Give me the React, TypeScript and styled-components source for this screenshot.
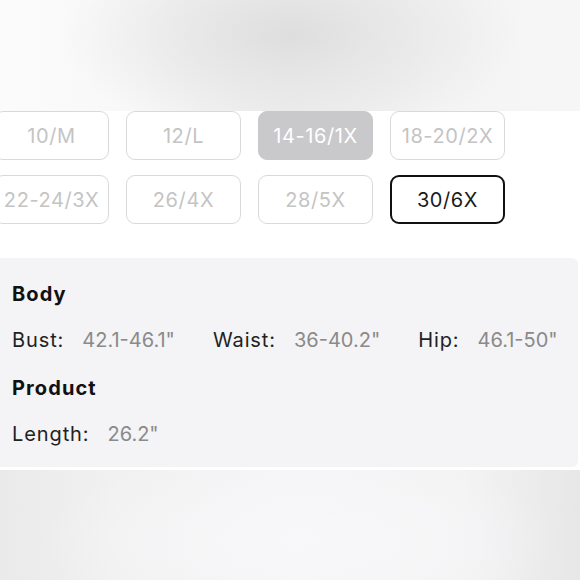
import React from "react";
import styled, { createGlobalStyle } from "styled-components";

const Global = createGlobalStyle`
  html, body { margin: 0; padding: 0; background: #ffffff; }
  body { width: 580px; height: 580px; overflow: hidden; font-family: "Inter", "Liberation Sans", sans-serif; }
  #root { width: 580px; height: 580px; }
`;

const Page = styled.div`
  width: 580px;
  height: 580px;
  display: flex;
  flex-direction: column;
  overflow: hidden;
  background: #ffffff;
`;

const TopBlur = styled.div`
  height: 111px;
  flex: none;
  background:
    radial-gradient(ellipse 230px 110px at 290px 35px, #dedede 0%, rgba(228,228,229,0.85) 35%, rgba(240,240,241,0) 100%),
    linear-gradient(90deg, #fbfbfb 0%, #f8f8f8 25%, #efefef 50%, #f4f4f4 75%, #f6f6f6 100%);
`;

const SizeSection = styled.div`
  flex: none;
  padding: 0 0 34px 0;
  overflow: hidden;
`;

const SizeGrid = styled.div`
  display: grid;
  grid-template-columns: repeat(4, 115px);
  column-gap: 17px;
  row-gap: 15px;
  margin-left: -6px;
`;

const SizeButton = styled.div<{ $state: "idle" | "soldout" | "selected" }>`
  box-sizing: border-box;
  height: 49px;
  border-radius: 9px;
  display: flex;
  align-items: center;
  justify-content: center;
  font-size: 20px;
  letter-spacing: 0.6px;
  border: ${(p) =>
    p.$state === "selected" ? "2px solid #111111" : p.$state === "soldout" ? "1.5px solid #c9c8cb" : "1.5px solid #d9d9d9"};
  background: ${(p) => (p.$state === "soldout" ? "#c9c8cb" : "#ffffff")};
  color: ${(p) => (p.$state === "selected" ? "#1a1a1a" : p.$state === "soldout" ? "#ffffff" : "#c4c4c4")};
`;

const Panel = styled.div`
  flex: none;
  box-sizing: border-box;
  width: 578px;
  height: 209px;
  background: #f4f3f5;
  border-radius: 0 6px 6px 0;
  padding: 24px 0 0 12px;
  display: flex;
  flex-direction: column;
`;

const Heading = styled.div<{ $mt?: number }>`
  font-weight: 700;
  font-size: 20px;
  line-height: 24px;
  letter-spacing: 1.1px;
  color: #111111;
  margin-top: ${(p) => p.$mt ?? 0}px;
`;

const MeasureRow = styled.div`
  display: flex;
  gap: 38px;
  margin-top: 22px;
  font-size: 20px;
  line-height: 24px;
`;

const Measure = styled.div`
  display: flex;
  gap: 18px;
`;

const Label = styled.span`
  color: #222222;
  letter-spacing: 0.9px;
`;

const Value = styled.span`
  color: #8a8a8a;
  letter-spacing: 0;
`;

const Separator = styled.div`
  flex: none;
  height: 3px;
  background: #ffffff;
`;

const BottomBlur = styled.div`
  flex: 1;
  background:
    radial-gradient(ellipse 260px 90px at 300px 70px, #f8f7f9 0%, rgba(246,245,247,0) 100%),
    linear-gradient(90deg, #eaeaea 0%, #f1f1f1 20%, #f5f4f6 50%, #f3f3f4 80%, #e7e7e8 100%);
`;

const sizes: { label: string; state: "idle" | "soldout" | "selected" }[] = [
  { label: "10/M", state: "idle" },
  { label: "12/L", state: "idle" },
  { label: "14-16/1X", state: "soldout" },
  { label: "18-20/2X", state: "idle" },
  { label: "22-24/3X", state: "idle" },
  { label: "26/4X", state: "idle" },
  { label: "28/5X", state: "idle" },
  { label: "30/6X", state: "selected" },
];

export default function App() {
  return (
    <Page>
      <Global />
      <TopBlur />
      <SizeSection>
        <SizeGrid>
          {sizes.map((s) => (
            <SizeButton key={s.label} $state={s.state}>
              {s.label}
            </SizeButton>
          ))}
        </SizeGrid>
      </SizeSection>
      <Panel>
        <Heading>Body</Heading>
        <MeasureRow>
          <Measure>
            <Label>Bust:</Label>
            <Value>42.1-46.1"</Value>
          </Measure>
          <Measure>
            <Label>Waist:</Label>
            <Value>36-40.2"</Value>
          </Measure>
          <Measure>
            <Label>Hip:</Label>
            <Value>46.1-50"</Value>
          </Measure>
        </MeasureRow>
        <Heading $mt={24}>Product</Heading>
        <MeasureRow>
          <Measure>
            <Label>Length:</Label>
            <Value>26.2"</Value>
          </Measure>
        </MeasureRow>
      </Panel>
      <Separator />
      <BottomBlur />
    </Page>
  );
}
